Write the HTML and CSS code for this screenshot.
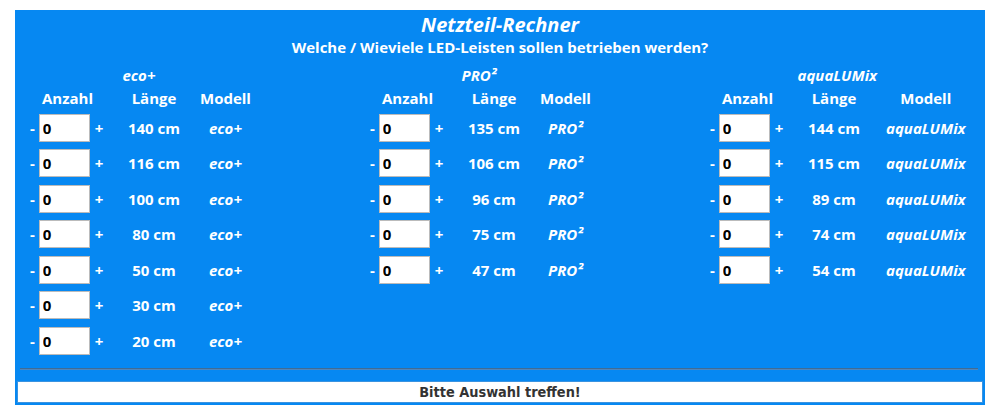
FILE: index.html
```html
<!DOCTYPE html>
<html lang="de">
<head>
    <meta charset="UTF-8">
    <meta name="viewport" content="width=device-width, initial-scale=1.0">
    <title>Netzteil-Rechner</title>
    <link rel="stylesheet" href="styles.css">
</head>
<body>

    <div class="rechner">
        <h2 class="titel">Netzteil-Rechner</h2>
        <p class="frage">Welche / Wieviele LED-Leisten sollen betrieben werden?</p>

        <div class="leisten">
            <table class="leiste">
                <caption>eco+</caption>
                <tr>
                    <th class="anzahl">Anzahl</th>
                    <th class="laenge">Länge</th>
                    <th class="modell">Modell</th>
                </tr>
                <tr><td class="anzahl"><div class="zaehler"><span>-</span><input type="text" value="0"><span>+</span></div></td><td class="laenge">140 cm</td><td class="modell">eco+</td></tr>
                <tr><td class="anzahl"><div class="zaehler"><span>-</span><input type="text" value="0"><span>+</span></div></td><td class="laenge">116 cm</td><td class="modell">eco+</td></tr>
                <tr><td class="anzahl"><div class="zaehler"><span>-</span><input type="text" value="0"><span>+</span></div></td><td class="laenge">100 cm</td><td class="modell">eco+</td></tr>
                <tr><td class="anzahl"><div class="zaehler"><span>-</span><input type="text" value="0"><span>+</span></div></td><td class="laenge">80 cm</td><td class="modell">eco+</td></tr>
                <tr><td class="anzahl"><div class="zaehler"><span>-</span><input type="text" value="0"><span>+</span></div></td><td class="laenge">50 cm</td><td class="modell">eco+</td></tr>
                <tr><td class="anzahl"><div class="zaehler"><span>-</span><input type="text" value="0"><span>+</span></div></td><td class="laenge">30 cm</td><td class="modell">eco+</td></tr>
                <tr><td class="anzahl"><div class="zaehler"><span>-</span><input type="text" value="0"><span>+</span></div></td><td class="laenge">20 cm</td><td class="modell">eco+</td></tr>
            </table>

            <table class="leiste">
                <caption>PRO²</caption>
                <tr>
                    <th class="anzahl">Anzahl</th>
                    <th class="laenge">Länge</th>
                    <th class="modell">Modell</th>
                </tr>
                <tr><td class="anzahl"><div class="zaehler"><span>-</span><input type="text" value="0"><span>+</span></div></td><td class="laenge">135 cm</td><td class="modell">PRO²</td></tr>
                <tr><td class="anzahl"><div class="zaehler"><span>-</span><input type="text" value="0"><span>+</span></div></td><td class="laenge">106 cm</td><td class="modell">PRO²</td></tr>
                <tr><td class="anzahl"><div class="zaehler"><span>-</span><input type="text" value="0"><span>+</span></div></td><td class="laenge">96 cm</td><td class="modell">PRO²</td></tr>
                <tr><td class="anzahl"><div class="zaehler"><span>-</span><input type="text" value="0"><span>+</span></div></td><td class="laenge">75 cm</td><td class="modell">PRO²</td></tr>
                <tr><td class="anzahl"><div class="zaehler"><span>-</span><input type="text" value="0"><span>+</span></div></td><td class="laenge">47 cm</td><td class="modell">PRO²</td></tr>
            </table>

            <table class="leiste lang">
                <caption>aquaLUMix</caption>
                <tr>
                    <th class="anzahl">Anzahl</th>
                    <th class="laenge">Länge</th>
                    <th class="modell">Modell</th>
                </tr>
                <tr><td class="anzahl"><div class="zaehler"><span>-</span><input type="text" value="0"><span>+</span></div></td><td class="laenge">144 cm</td><td class="modell">aquaLUMix</td></tr>
                <tr><td class="anzahl"><div class="zaehler"><span>-</span><input type="text" value="0"><span>+</span></div></td><td class="laenge">115 cm</td><td class="modell">aquaLUMix</td></tr>
                <tr><td class="anzahl"><div class="zaehler"><span>-</span><input type="text" value="0"><span>+</span></div></td><td class="laenge">89 cm</td><td class="modell">aquaLUMix</td></tr>
                <tr><td class="anzahl"><div class="zaehler"><span>-</span><input type="text" value="0"><span>+</span></div></td><td class="laenge">74 cm</td><td class="modell">aquaLUMix</td></tr>
                <tr><td class="anzahl"><div class="zaehler"><span>-</span><input type="text" value="0"><span>+</span></div></td><td class="laenge">54 cm</td><td class="modell">aquaLUMix</td></tr>
            </table>
        </div>

        <hr>

        <div class="ergebnis">Bitte Auswahl treffen!</div>
    </div>

</body>
</html>
```

FILE: styles.css
```css
body {
    margin: 0;
    padding: 10px 15px;
    background: #fff;
    font-family: 'Open Sans', 'Liberation Sans', sans-serif;
}

.rechner {
    background: #0688f2;
    color: #fff;
    padding: 2px 2px 2px;
}

.titel {
    margin: 0;
    font-size: 20px;
    line-height: 25px;
    font-style: italic;
    font-weight: 700;
    text-align: center;
}

.frage {
    margin: 0;
    font-size: 15px;
    line-height: 20px;
    font-weight: 700;
    text-align: center;
}

.leisten {
    display: grid;
    grid-template-columns: 340px 340px 1fr;
    align-items: start;
    justify-items: start;
    margin-top: 8px;
    padding-left: 8px;
}

.leiste {
    border-collapse: collapse;
    font-size: 15px;
    line-height: 20px;
    font-weight: 700;
}

.leiste caption {
    font-style: italic;
}

.leiste th {
    padding: 3px 4px 2px;
    text-align: center;
}

.leiste td {
    height: 35.5px;
    padding: 0 4px;
    vertical-align: middle;
}

.leiste td.anzahl {
    width: 80px;
    padding: 0 0 0 5px;
}

.leiste .laenge {
    width: 80px;
    text-align: center;
}

.leiste .modell {
    padding: 0 2px;
    text-align: center;
    font-style: italic;
}

.leiste th.modell {
    font-style: normal;
}

/* aquaLUMix braucht mehr Platz */
.leiste.lang .modell {
    padding: 0 4px 0 8px;
}

/* - [Anzahl] + */
.zaehler {
    display: flex;
    align-items: center;
}

.zaehler input {
    width: 51px;
    height: 28px;
    box-sizing: border-box;
    margin: 0 5px 0 4px;
    padding: 0 3px;
    border: 1px solid #bbb;
    font-family: 'Open Sans', 'Liberation Sans', sans-serif;
    font-size: 15px;
    font-weight: 700;
    color: #000;
}

hr {
    height: 0;
    margin: 9.5px 5px 11px 3px;
    border: 0;
    border-top: 1px solid #3f6c95;
    border-bottom: 1px solid #4f86bd;
}

.ergebnis {
    background: #fff;
    border: 1px solid #3a93e0;
    color: #333;
    font-family: 'DejaVu Sans Condensed', 'DejaVu Sans', sans-serif;
    font-stretch: condensed;
    font-size: 14.4px;
    font-weight: 700;
    line-height: 20px;
    text-align: center;
}
```
